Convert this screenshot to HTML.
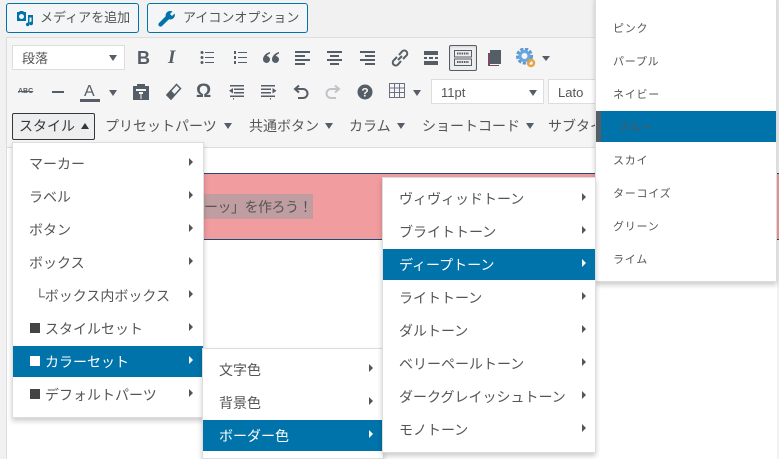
<!DOCTYPE html>
<html lang="ja"><head><meta charset="utf-8"><style>
html,body{margin:0;padding:0}
body{width:779px;height:459px;overflow:hidden;background:#f1f1f1;position:relative;font-family:"Liberation Sans","Noto Sans CJK JP",sans-serif;color:#555d66}
.a,.t,svg{position:absolute}
.t{white-space:nowrap;font-size:14px;line-height:20px;color:#555}
.btn{position:absolute;box-sizing:border-box;height:30px;top:3px;border:1px solid #0073aa;border-radius:3px;background:#f3f5f6;}
.sel{position:absolute;box-sizing:border-box;background:#fff;border:1px solid #ddd}
.c{position:absolute;width:0;height:0;border-left:5px solid transparent;border-right:5px solid transparent;border-top:6px solid #555d66}
.m{position:absolute;box-sizing:border-box;background:#fff;border:1px solid #ddd;box-shadow:0 3px 5px rgba(0,0,0,.2)}
.h{position:absolute;background:#0073aa}
.r{position:absolute;width:0;height:0;border-top:4px solid transparent;border-bottom:4px solid transparent;border-left:4px solid #555}
.r.w{border-left-color:#fff}
.s{position:absolute;width:10px;height:10px;background:#444}
.f{font-size:11px;letter-spacing:.75px}
</style></head><body>
<div class="a" style="left:776px;top:0;width:1px;height:459px;background:#e5e5e5"></div>
<div class="a" style="left:6px;top:37px;width:771px;height:422px;background:#fff;box-sizing:border-box;border-left:1px solid #ddd"></div>
<div class="a" style="left:7px;top:37px;width:770px;height:111px;background:#f5f5f5;border-top:1px solid #ddd;border-bottom:1px solid #ddd;box-sizing:border-box"></div>

<div class="btn" style="left:6px;width:133px"></div>
<svg style="left:16px;top:10px" width="18" height="17" viewBox="0 0 18 17"><path fill="#0073aa" fill-rule="evenodd" d="M1 2h2l1-1h3l1 1h2v9H1zM5.500 4a2.500 2.500 0 1 0 .01 0zM12 5h5v8.500a1.800 1.800 0 1 1-1.500-1.800V7.500H13.500v7a1.800 1.800 0 1 1-1.500-1.800z"/></svg>
<div class="t" style="left:40px;top:8px;font-size:13px">メディアを追加</div>
<div class="btn" style="left:147px;width:161px"></div>
<svg style="left:158px;top:10px" width="18" height="18" viewBox="0 0 18 18"><path fill="#0073aa" d="M12.500 1a4.500 4.500 0 0 1 2 .4L12 4l2 2 2.600-2.500a4.500 4.500 0 0 1-5.600 5.800L4 16a2 2 0 0 1-3-3l6.700-6.800A4.500 4.500 0 0 1 12.500 1z"/></svg>
<div class="t" style="left:183px;top:8px;font-size:13px">アイコンオプション</div>

<!-- row 1 -->
<div class="sel" style="left:12px;top:45px;width:113px;height:25px"></div>
<div class="t" style="left:22px;top:49px;font-size:13px">段落</div>
<div class="c" style="left:109px;top:55px;border-left-width:4.500px;border-right-width:4.500px"></div>
<div class="t" style="left:137px;top:47px;font:bold 18px/22px 'Liberation Sans';color:#555d66">B</div>
<div class="t" style="left:168px;top:47px;font:italic bold 19px/22px 'Liberation Serif';color:#555d66">I</div>
<svg style="left:200px;top:50px" width="15" height="15" viewBox="0 0 15 15" fill="#555d66"><circle cx="2" cy="2.500" r="1.500"/><circle cx="2" cy="7.500" r="1.500"/><circle cx="2" cy="12.500" r="1.500"/><path d="M5 2h9v1H5zM5 7h9v1H5zM5 12h9v1H5z"/></svg>
<svg style="left:233px;top:50px" width="15" height="15" viewBox="0 0 15 15" fill="#555d66"><path d="M1 1h2v3H1zM1 6h2v3H1zM1 11h2v3H1zM5 2h9v1H5zM5 7h9v1H5zM5 12h9v1H5z"/></svg>
<svg style="left:263px;top:51px" width="16" height="13" viewBox="0 0 16 13" fill="#555d66"><path d="M7 1C3 2 0 5 0 8.500A3.500 3.500 0 1 0 3.800 5C4.200 4 5.500 3 7 2.500zM16 1c-4 1-7 4-7 7.500A3.500 3.500 0 1 0 12.800 5c.4-1 1.700-2 3.200-2.500z"/></svg>
<svg style="left:295px;top:51px" width="16" height="14" viewBox="0 0 16 14" fill="#555d66"><path d="M0 0h15v2H0zM0 4h10v2H0zM0 8h15v2H0zM0 12h10v2H0z"/></svg>
<svg style="left:327px;top:51px" width="16" height="14" viewBox="0 0 16 14" fill="#555d66"><path d="M0 0h15v2H0zM3 4h9v2H3zM0 8h15v2H0zM3 12h9v2H3z"/></svg>
<svg style="left:360px;top:51px" width="16" height="14" viewBox="0 0 16 14" fill="#555d66"><path d="M0 0h15v2H0zM5 4h10v2H5zM0 8h15v2H0zM5 12h10v2H5z"/></svg>
<svg style="left:391px;top:49px" width="18" height="18" viewBox="0 0 18 18" fill="none" stroke="#555d66" stroke-width="2"><path d="M8 6l3-3.500a3 3 0 0 1 4.500 4L12 10M10 12l-3 3.500a3 3 0 0 1-4.500-4L6 8M7 11l4-4"/></svg>
<svg style="left:424px;top:51px" width="15" height="14" viewBox="0 0 15 14" fill="#555d66"><path d="M0 0h14v4H0zM0 10h14v4H0zM0 6h3v2H0zM5 6h4v2H5zM11 6h3v2h-3z"/></svg>
<div class="a" style="left:449px;top:45px;width:28px;height:26px;box-sizing:border-box;border:1px solid #555d66;border-radius:2px;background:#eee;box-shadow:inset 0 1px 2px rgba(0,0,0,.1)"></div>
<svg style="left:454px;top:50px" width="18" height="16" viewBox="0 0 18 16" fill="none" stroke="#555d66"><rect x=".5" y=".5" width="17" height="6.500"/><rect x=".5" y="9" width="17" height="6.500"/><path d="M3 3.500h12M3 12h12" stroke-width="2" stroke-dasharray="1.500 .8"/></svg>
<svg style="left:487px;top:50px" width="15" height="16" viewBox="0 0 15 16"><path fill="#7a4a60" d="M1 3h2v12h9v1H1z"/><path fill="#555d66" d="M3 0h11v14H3z"/></svg>
<svg style="left:516px;top:48px" width="21" height="20" viewBox="0 0 21 20"><circle cx="8.500" cy="8" r="6.500" fill="none" stroke="#5b9bd5" stroke-width="4" stroke-dasharray="3 1.400"/><circle cx="8.500" cy="8" r="4.500" fill="none" stroke="#6aa5dc" stroke-width="3"/><circle cx="15" cy="15" r="3" fill="none" stroke="#e8a33c" stroke-width="2.500"/></svg>
<div class="c" style="left:542px;top:56px;border-left-width:4px;border-right-width:4px;border-top-width:5px"></div>

<!-- row 2 -->
<div class="t" style="left:18px;top:87px;font:bold 7px/10px 'Liberation Sans';color:#555d66;text-decoration:line-through">ABC</div>
<div class="a" style="left:52px;top:91px;width:12px;height:2px;background:#555d66"></div>
<div class="t" style="left:84px;top:82px;font:16px/20px 'Liberation Sans';color:#555d66">A</div>
<div class="a" style="left:80px;top:99px;width:20px;height:3px;background:#555d66"></div>
<div class="c" style="left:109px;top:90px;border-left-width:4px;border-right-width:4px"></div>
<svg style="left:132px;top:83px" width="18" height="18" viewBox="0 0 18 18"><path fill="#555d66" fill-rule="evenodd" d="M1 3h4V1h8v2h4v14H1zM4 6v2h10V6zM7 9v2h1.500v5h1v-5H11V9z"/></svg>
<svg style="left:165px;top:83px" width="17" height="18" viewBox="0 0 17 18" fill="none" stroke="#555d66" stroke-width="1.500"><path d="M11.500 1.500l4 4L6 16l-4-4z"/><path fill="#555d66" d="M2 12l4 4 3.500-4-4-4z"/></svg>
<div class="t" style="left:196px;top:82px;font:bold 19px/20px 'Liberation Sans';color:#555d66">Ω</div>
<svg style="left:229px;top:84px" width="16" height="16" viewBox="0 0 16 16" fill="#555d66"><path d="M1 1h14v1.500H1zM5 4.500h10V6H5zM5 8h10v1.500H5zM1 11.500h14V13H1zM4 14h1v1.500H4zM0 6.700L4 4v5.500z"/></svg>
<svg style="left:261px;top:84px" width="16" height="16" viewBox="0 0 16 16" fill="#555d66"><path d="M0 1h14v1.500H0zM0 4.500h10V6H0zM0 8h10v1.500H0zM0 11.500h14V13H0zM9 14h1v1.500H9zM15.500 6.700L11.500 4v5.500z"/></svg>
<svg style="left:293px;top:84px" width="16" height="16" viewBox="0 0 16 16" fill="none" stroke="#555d66" stroke-width="2"><path d="M6 1.500L2 5l4 3.500M2 5h8a4 4 0 0 1 0 9H5"/></svg>
<svg style="left:325px;top:84px" width="16" height="16" viewBox="0 0 16 16" fill="none" stroke="#c0c4c8" stroke-width="2"><path d="M10 1.500L14 5l-4 3.500M14 5H6a4 4 0 0 0 0 9h5"/></svg>
<svg style="left:357px;top:84px" width="16" height="16" viewBox="0 0 16 16"><circle cx="8" cy="8" r="7.500" fill="#555d66"/><text x="8" y="12.500" text-anchor="middle" font-size="12" font-weight="bold" font-family="Liberation Sans" fill="#f5f5f5">?</text></svg>
<svg style="left:389px;top:83px" width="16" height="15" viewBox="0 0 16 15" fill="none" stroke="#6a6f85"><path d="M.5.500h15v14H.5zM.5 5h15M.5 9.500h15M5.500.5v14M10.500.5v14"/></svg>
<div class="c" style="left:413px;top:90px;border-left-width:4px;border-right-width:4px"></div>
<div class="sel" style="left:431px;top:79px;width:113px;height:25px"></div>
<div class="t" style="left:441px;top:83px;font-size:13px">11pt</div>
<div class="c" style="left:529px;top:90px;border-left-width:4px;border-right-width:4px"></div>
<div class="sel" style="left:548px;top:79px;width:60px;height:25px"></div>
<div class="t" style="left:558px;top:83px;font-size:13px">Lato</div>

<!-- row 3 -->
<div class="a" style="left:12px;top:113px;width:83px;height:27px;box-sizing:border-box;border:1px solid #32373c;border-radius:2px;background:#eee"></div>
<div class="t" style="left:19px;top:116px;color:#32373c">スタイル</div>
<div class="a" style="left:81px;top:123px;width:0;height:0;border-left:4px solid transparent;border-right:4px solid transparent;border-bottom:6px solid #32373c"></div>
<div class="t" style="left:105px;top:116px">プリセットパーツ</div><div class="c" style="left:224px;top:123px;border-left-width:4px;border-right-width:4px"></div>
<div class="t" style="left:249px;top:116px">共通ボタン</div><div class="c" style="left:325px;top:123px;border-left-width:4px;border-right-width:4px"></div>
<div class="t" style="left:349px;top:116px">カラム</div><div class="c" style="left:397px;top:123px;border-left-width:4px;border-right-width:4px"></div>
<div class="t" style="left:422px;top:116px">ショートコード</div><div class="c" style="left:526px;top:123px;border-left-width:4px;border-right-width:4px"></div>
<div class="t" style="left:548px;top:116px">サブタイトル</div>

<!-- pink -->
<div class="a" style="left:203px;top:173px;width:576px;height:67px;box-sizing:border-box;background:#f19c9f;border-top:1px solid #1d4a7a;border-bottom:1px solid #1d4a7a"></div>
<div class="a" style="left:203px;top:194px;width:110px;height:25px;background:#c09da0"></div>
<div class="t" style="left:204px;top:197px;letter-spacing:-.5px">ーッ」を作ろう！</div>

<!-- far right menu -->
<div class="m" style="left:595px;top:-5px;width:182px;height:287px"></div>
<div class="h" style="left:596px;top:111px;width:180px;height:31px"></div>
<div class="a" style="left:596px;top:111px;width:5px;height:31px;background:#555d66"></div>
<div class="t f" style="left:613px;top:19px">ピンク</div>
<div class="t f" style="left:613px;top:52px">パープル</div>
<div class="t f" style="left:613px;top:85px">ネイビー</div>
<div class="t f" style="left:618px;top:118px">ブルー</div>
<div class="t f" style="left:613px;top:151px">スカイ</div>
<div class="t f" style="left:613px;top:184px">ターコイズ</div>
<div class="t f" style="left:613px;top:217px">グリーン</div>
<div class="t f" style="left:613px;top:250px">ライム</div>

<!-- menu 1 -->
<div class="m" style="left:12px;top:142px;width:192px;height:276px"></div>
<div class="h" style="left:13px;top:346px;width:190px;height:31px"></div>
<div class="t" style="left:29px;top:154px">マーカー</div><div class="r" style="left:189px;top:158px"></div>
<div class="t" style="left:29px;top:187px">ラベル</div><div class="r" style="left:189px;top:191px"></div>
<div class="t" style="left:29px;top:220px">ボタン</div><div class="r" style="left:189px;top:224px"></div>
<div class="t" style="left:29px;top:253px">ボックス</div><div class="r" style="left:189px;top:257px"></div>
<div class="t" style="left:31px;top:286px">&nbsp;└ボックス内ボックス</div><div class="r" style="left:189px;top:290px"></div>
<div class="s" style="left:30px;top:323px"></div><div class="t" style="left:45px;top:319px">スタイルセット</div><div class="r" style="left:189px;top:323px"></div>
<div class="s" style="left:30px;top:356px;background:#fff"></div><div class="t" style="left:45px;top:352px;color:#fff">カラーセット</div><div class="r w" style="left:189px;top:356px"></div>
<div class="s" style="left:30px;top:389px"></div><div class="t" style="left:45px;top:385px">デフォルトパーツ</div><div class="r" style="left:189px;top:389px"></div>

<!-- menu 2 -->
<div class="m" style="left:202px;top:348px;width:182px;height:111px"></div>
<div class="h" style="left:203px;top:420px;width:180px;height:31px"></div>
<div class="t" style="left:219px;top:360px">文字色</div><div class="r" style="left:369px;top:364px"></div>
<div class="t" style="left:219px;top:393px">背景色</div><div class="r" style="left:369px;top:397px"></div>
<div class="t" style="left:219px;top:426px;color:#fff">ボーダー色</div><div class="r w" style="left:369px;top:430px"></div>

<!-- menu 3 -->
<div class="m" style="left:382px;top:177px;width:214px;height:276px"></div>
<div class="h" style="left:383px;top:249px;width:212px;height:31px"></div>
<div class="t" style="left:399px;top:189px">ヴィヴィッドトーン</div><div class="r" style="left:582px;top:193px"></div>
<div class="t" style="left:399px;top:222px">ブライトトーン</div><div class="r" style="left:582px;top:226px"></div>
<div class="t" style="left:399px;top:255px;color:#fff">ディープトーン</div><div class="r w" style="left:582px;top:259px"></div>
<div class="t" style="left:399px;top:288px">ライトトーン</div><div class="r" style="left:582px;top:292px"></div>
<div class="t" style="left:399px;top:321px">ダルトーン</div><div class="r" style="left:582px;top:325px"></div>
<div class="t" style="left:399px;top:354px">ベリーペールトーン</div><div class="r" style="left:582px;top:358px"></div>
<div class="t" style="left:399px;top:387px">ダークグレイッシュトーン</div><div class="r" style="left:582px;top:391px"></div>
<div class="t" style="left:399px;top:420px">モノトーン</div><div class="r" style="left:582px;top:424px"></div>
</body></html>
